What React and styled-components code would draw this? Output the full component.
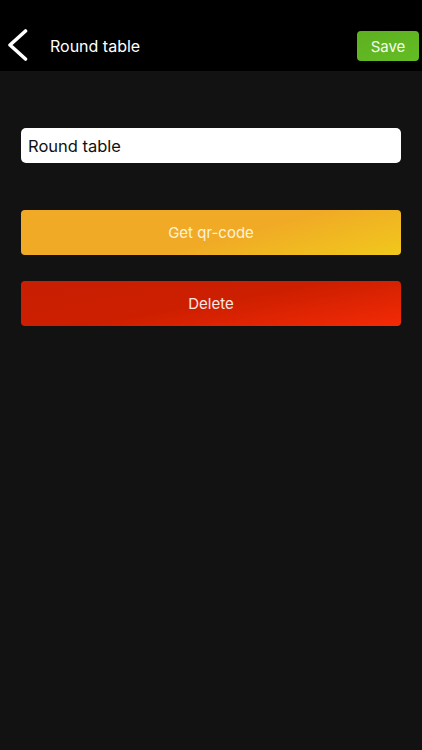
import React from "react";
import styled, { createGlobalStyle } from "styled-components";

const GlobalStyle = createGlobalStyle`
  html, body {
    margin: 0;
    padding: 0;
    background: #121212;
    font-family: Inter, "Liberation Sans", sans-serif;
  }
`;

const App = () => {
  return (
    <>
      <GlobalStyle />
      <Screen>
        <Header>
          <BackButton aria-label="Back">
            <svg width="22" height="32" viewBox="0 0 22 32" fill="none">
              <path
                d="M18.5 2 L3 16 L18.5 30"
                stroke="#fff"
                strokeWidth="3.6"
                strokeLinecap="round"
                strokeLinejoin="round"
              />
            </svg>
          </BackButton>
          <Title>Round table</Title>
          <SaveButton>Save</SaveButton>
        </Header>
        <Content>
          <NameInput defaultValue="Round table" />
          <Actions>
            <ActionButton $variant="qr">Get qr-code</ActionButton>
            <ActionButton $variant="delete">Delete</ActionButton>
          </Actions>
        </Content>
      </Screen>
    </>
  );
};

export default App;

const Screen = styled.div`
  width: 422px;
  min-height: 750px;
  background: #121212;
  display: flex;
  flex-direction: column;
`;

const Header = styled.header`
  height: 71px;
  box-sizing: border-box;
  background: #000;
  display: flex;
  align-items: flex-end;
  padding: 0 3px 10px 7px;
`;

const BackButton = styled.button`
  background: none;
  border: 0;
  padding: 0;
  width: 22px;
  height: 32px;
  display: flex;
  align-items: center;
  cursor: pointer;
`;

const Title = styled.h1`
  flex: 1;
  margin: 0 0 0 21px;
  color: #fff;
  font-size: 16px;
  font-weight: 400;
  line-height: 30px;
`;

const SaveButton = styled.button`
  width: 62px;
  height: 30px;
  border: 0;
  border-radius: 4px;
  background: linear-gradient(160deg, #5db01f 0%, #64bd25 100%);
  color: #f4fbef;
  font-family: inherit;
  font-size: 15px;
  cursor: pointer;
`;

const Content = styled.main`
  padding: 57px 21px 0;
  display: flex;
  flex-direction: column;
`;

const NameInput = styled.input`
  box-sizing: border-box;
  height: 35px;
  width: 100%;
  border: 0;
  border-radius: 5px;
  background: #fff;
  padding: 0 7px;
  font-family: inherit;
  font-size: 16.5px;
  color: #111;
  outline: none;
`;

const Actions = styled.div`
  margin-top: 47px;
  display: flex;
  flex-direction: column;
  gap: 26px;
`;

const gradients = {
  qr: "linear-gradient(165deg, #f0aa26 0%, #f0aa26 55%, #f1c81c 100%)",
  delete: "linear-gradient(170deg, #c81e02 0%, #cd1f00 50%, #f42a06 100%)",
};

const ActionButton = styled.button`
  height: 45px;
  width: 100%;
  border: 0;
  border-radius: 4px;
  background: ${(p) => gradients[p.$variant]};
  color: ${(p) => (p.$variant === "qr" ? "#fdf3dc" : "#fbe7e2")};
  font-family: inherit;
  font-size: 15px;
  cursor: pointer;
`;
